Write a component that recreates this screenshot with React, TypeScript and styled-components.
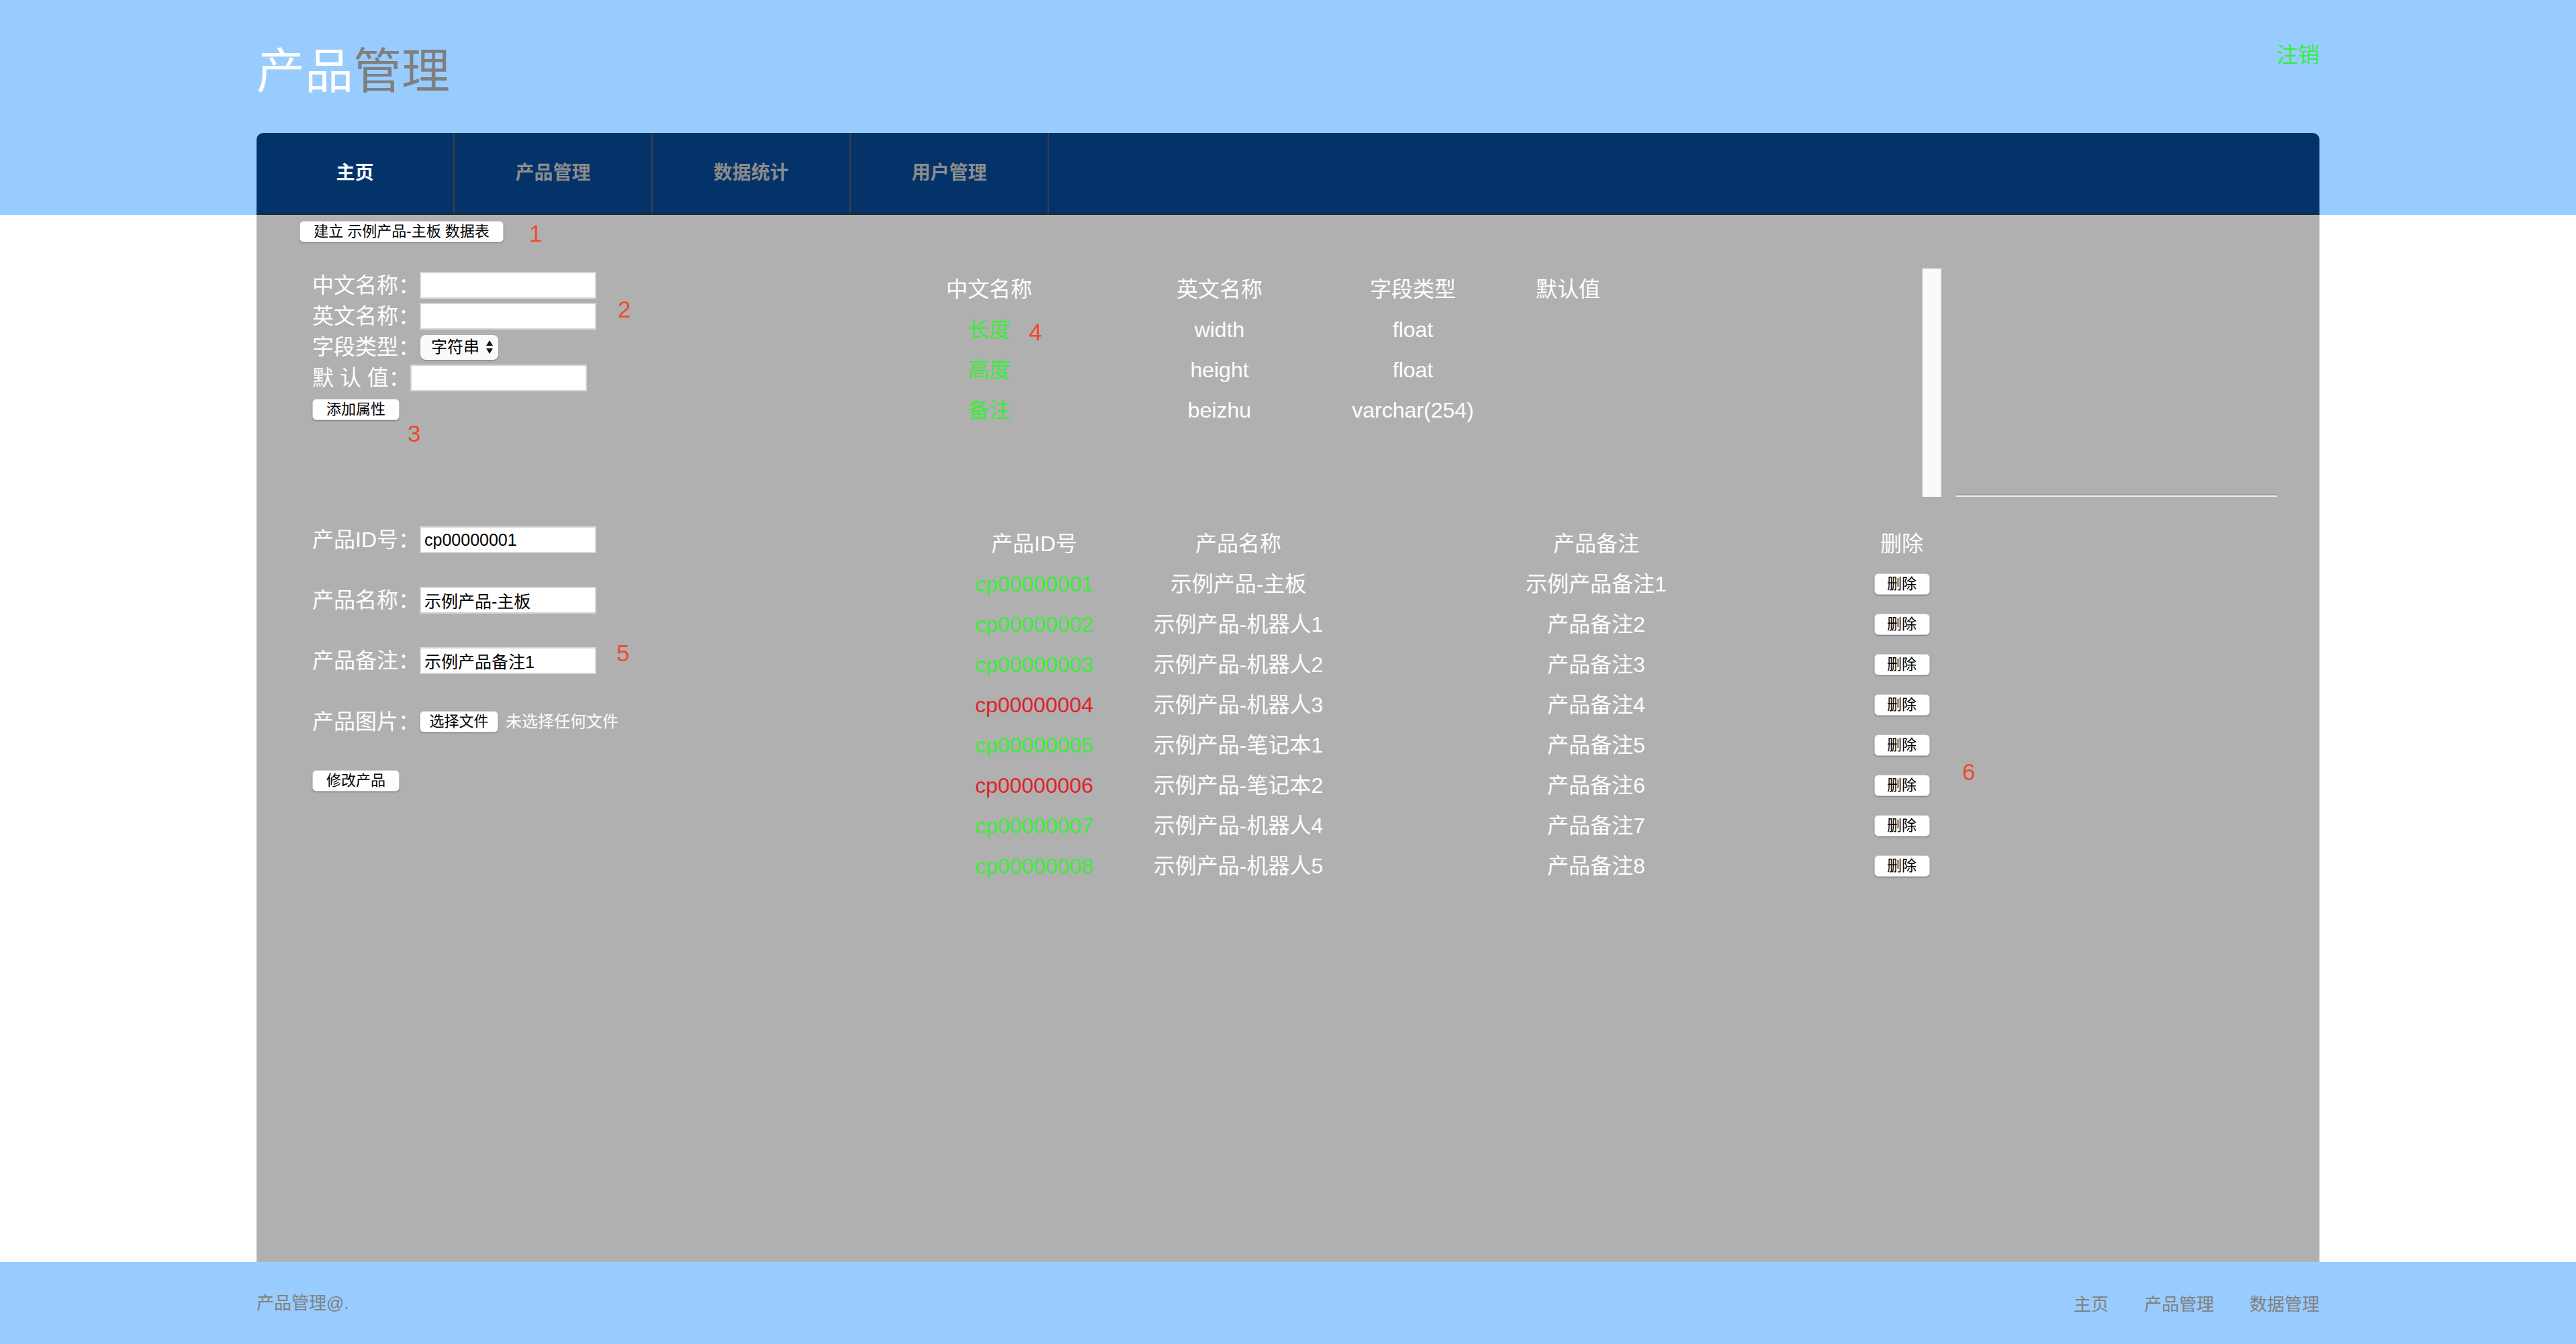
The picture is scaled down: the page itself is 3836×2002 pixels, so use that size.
import React from "react";
import styled, { createGlobalStyle } from "styled-components";

const GlobalStyle = createGlobalStyle`
  html, body { margin: 0; padding: 0; background: #ffffff; }
  body { font-family: "Liberation Sans", "Noto Sans CJK SC", sans-serif; }
  * { box-sizing: border-box; }
`;

const Page = styled.div`
  min-height: 100vh;
  display: flex;
  flex-direction: column;
`;

const Header = styled.header`
  background: #99ccfe;
`;

const HeaderTop = styled.div`
  width: 3072px;
  margin: 0 auto;
  height: 198px;
  display: flex;
  justify-content: space-between;
  align-items: flex-start;
`;

const Title = styled.h1`
  margin: 70px 0 0;
  font-size: 72px;
  line-height: 72px;
  font-weight: normal;
  color: #7f7f7f;
`;

const TitleLight = styled.span`
  color: #ffffff;
`;

const Logout = styled.a`
  margin-top: 66px;
  font-size: 32px;
  line-height: 32px;
  color: #33ee44;
  text-decoration: none;
`;

const Nav = styled.nav`
  width: 3072px;
  margin: 0 auto;
  height: 122px;
  display: flex;
  background: #04336a;
  border-radius: 10px 10px 0 0;
  border-bottom: 2px solid #1c2331;
  overflow: hidden;
`;

const Tab = styled.a<{ $active?: boolean }>`
  width: 295px;
  display: flex;
  align-items: center;
  justify-content: center;
  border-right: 2px solid #3a3f48;
  font-size: 28px;
  line-height: 28px;
  font-weight: bold;
  color: ${(p) => (p.$active ? "#ffffff" : "#8c8c8c")};
  text-decoration: none;
`;

const Main = styled.main`
  width: 3072px;
  margin: 0 auto;
  flex: 1;
  background: #b0b0b0;
  padding-top: 9px;
`;

const TopBar = styled.div`
  height: 32px;
  display: flex;
  align-items: flex-start;
  padding-left: 64px;
`;

const Btn = styled.button<{ $w: number }>`
  width: ${(p) => p.$w}px;
  height: 32px;
  padding: 0;
  background: #ffffff;
  border: 1px solid #c9c9c9;
  border-radius: 6px;
  box-shadow: 0 1px 2px rgba(0, 0, 0, 0.3);
  font-family: "Liberation Sans", "Noto Sans CJK SC", sans-serif;
  font-size: 22px;
  line-height: 30px;
  color: #000000;
  white-space: pre;
`;

const Annot = styled.span<{ $ml?: number; $mt?: number }>`
  font-family: "Liberation Sans", sans-serif;
  font-size: 35px;
  line-height: 35px;
  color: #ee4b2b;
  margin-left: ${(p) => p.$ml ?? 0}px;
  margin-top: ${(p) => p.$mt ?? 0}px;
  align-self: flex-start;
`;

const CellBadge = styled.span`
  position: absolute;
  left: 209px;
  top: 16px;
  font-family: "Liberation Sans", sans-serif;
  font-size: 35px;
  line-height: 35px;
  color: #ee4b2b;
`;

const Section = styled.section<{ $mt: number }>`
  display: flex;
  align-items: flex-start;
  margin-top: ${(p) => p.$mt}px;
`;

const Form = styled.div<{ $w: number; $pt: number; $gap: number }>`
  width: ${(p) => p.$w}px;
  padding: ${(p) => p.$pt}px 0 0 83px;
  display: flex;
  flex-direction: column;
  align-items: flex-start;
  gap: ${(p) => p.$gap}px;
`;

const Field = styled.div<{ $mt?: number }>`
  display: flex;
  align-items: center;
  margin-top: ${(p) => p.$mt ?? 0}px;
`;

const Label = styled.label`
  font-size: 32px;
  line-height: 40px;
  color: #ffffff;
  white-space: pre;
`;

const TextInput = styled.input`
  width: 263px;
  height: 40px;
  border: 2px solid #d6d6d6;
  background: #ffffff;
  padding: 0 5px;
  font-family: "Liberation Sans", "Noto Sans CJK SC", sans-serif;
  font-size: 25px;
  color: #000000;
  outline: none;
`;

const SelectBox = styled.div`
  width: 116px;
  height: 37px;
  margin-left: 1px;
  display: flex;
  align-items: center;
  padding: 0 7px 0 16px;
  background: #fafafa;
  border-radius: 8px;
  box-shadow: 0 1px 2px rgba(0, 0, 0, 0.3);
`;

const Select = styled.select`
  appearance: none;
  -webkit-appearance: none;
  flex: 1;
  min-width: 0;
  border: none;
  background: transparent;
  padding: 0;
  font-family: "Liberation Sans", "Noto Sans CJK SC", sans-serif;
  font-size: 24px;
  line-height: 30px;
  color: #000000;
  outline: none;
`;

const FileText = styled.span`
  margin-left: 11px;
  font-size: 24px;
  line-height: 32px;
  color: #ffffff;
`;

const Grid = styled.div<{ $cols: string; $mt?: number }>`
  display: grid;
  grid-template-columns: ${(p) => p.$cols};
  grid-auto-rows: 60px;
  margin-top: ${(p) => p.$mt ?? 0}px;
`;

const Cell = styled.div<{ $color?: string }>`
  position: relative;
  display: flex;
  align-items: center;
  justify-content: center;
  font-size: 32px;
  line-height: 40px;
  color: ${(p) => p.$color ?? "#ffffff"};
  white-space: nowrap;
`;

const ChartArea = styled.div`
  margin-left: 391px;
  height: 340px;
  display: flex;
  align-items: flex-end;
`;

const AxisBar = styled.div`
  width: 29px;
  height: 340px;
  background: #fafafa;
  border-left: 2px solid #d9d9d9;
  border-right: 1px solid #e6e6e6;
`;

const AxisLine = styled.div`
  margin-left: 21px;
  width: 479px;
  height: 4px;
  border-top: 2px solid #9d9d9d;
  border-left: 1px solid #dddddd;
  background: #efefef;
`;

const Footer = styled.footer`
  background: #99ccfe;
  height: 122px;
`;

const FooterInner = styled.div`
  width: 3072px;
  height: 100%;
  margin: 0 auto;
  display: flex;
  justify-content: space-between;
  align-items: center;
`;

const FooterText = styled.span`
  font-size: 26px;
  line-height: 30px;
  color: #808080;
`;

const FooterLinks = styled.div`
  display: flex;
  gap: 53px;
  padding-top: 4px;
`;

const FooterLink = styled.a`
  font-size: 26px;
  line-height: 30px;
  color: #808080;
  text-decoration: none;
`;

const GREEN = "#38ee38";
const RED = "#e2202a";

const attrs = [
  { cn: "长度", en: "width", type: "float" },
  { cn: "高度", en: "height", type: "float" },
  { cn: "备注", en: "beizhu", type: "varchar(254)" },
];

const products = [
  { id: "cp00000001", name: "示例产品-主板", note: "示例产品备注1", red: false },
  { id: "cp00000002", name: "示例产品-机器人1", note: "产品备注2", red: false },
  { id: "cp00000003", name: "示例产品-机器人2", note: "产品备注3", red: false },
  { id: "cp00000004", name: "示例产品-机器人3", note: "产品备注4", red: true },
  { id: "cp00000005", name: "示例产品-笔记本1", note: "产品备注5", red: false },
  { id: "cp00000006", name: "示例产品-笔记本2", note: "产品备注6", red: true },
  { id: "cp00000007", name: "示例产品-机器人4", note: "产品备注7", red: false },
  { id: "cp00000008", name: "示例产品-机器人5", note: "产品备注8", red: false },
];

const SelectArrows = () => (
  <svg width="12" height="22" viewBox="0 0 12 22">
    <path d="M6 1 L11 9 L1 9 Z" fill="#111" />
    <path d="M6 21 L11 13 L1 13 Z" fill="#111" />
  </svg>
);

export default function App() {
  return (
    <Page>
      <GlobalStyle />
      <Header>
        <HeaderTop>
          <Title>
            <TitleLight>产品</TitleLight>管理
          </Title>
          <Logout href="#">注销</Logout>
        </HeaderTop>
        <Nav>
          <Tab $active href="#">主页</Tab>
          <Tab href="#">产品管理</Tab>
          <Tab href="#">数据统计</Tab>
          <Tab href="#">用户管理</Tab>
        </Nav>
      </Header>

      <Main>
        <TopBar>
          <Btn $w={304}>建立 示例产品-主板 数据表</Btn>
          <Annot $ml={38} $mt={1}>1</Annot>
        </TopBar>

        <Section $mt={39}>
          <Form $w={941} $pt={5} $gap={6}>
            <Field>
              <Label>中文名称：</Label>
              <TextInput />
            </Field>
            <Field>
              <Label>英文名称：</Label>
              <TextInput />
              <Annot $ml={32} $mt={-8}>2</Annot>
            </Field>
            <Field>
              <Label>字段类型：</Label>
              <SelectBox>
                <Select defaultValue="string">
                  <option value="string">字符串</option>
                  <option value="float">浮点数</option>
                </Select>
                <SelectArrows />
              </SelectBox>
            </Field>
            <Field>
              <Label>默 认 值：</Label>
              <TextInput />
            </Field>
            <Field $mt={5}>
              <Btn $w={130}>添加属性</Btn>
            </Field>
            <Annot $ml={142} $mt={-4}>3</Annot>
          </Form>

          <Grid $cols="300px 386px 190px 272px" $mt={1}>
            <Cell>中文名称</Cell>
            <Cell>英文名称</Cell>
            <Cell>字段类型</Cell>
            <Cell>默认值</Cell>
            {attrs.map((a, i) => (
              <React.Fragment key={a.en}>
                <Cell $color={GREEN}>
                  {a.cn}
                  {i === 0 && <CellBadge>4</CellBadge>}
                </Cell>
                <Cell>{a.en}</Cell>
                <Cell>{a.type}</Cell>
                <Cell />
              </React.Fragment>
            ))}
          </Grid>

          <ChartArea>
            <AxisBar />
            <AxisLine />
          </ChartArea>
        </Section>

        <Section $mt={40}>
          <Form $w={1018} $pt={4} $gap={0}>
            <Field>
              <Label>产品ID号：</Label>
              <TextInput defaultValue="cp00000001" />
            </Field>
            <Field $mt={50}>
              <Label>产品名称：</Label>
              <TextInput defaultValue="示例产品-主板" />
            </Field>
            <Field $mt={50}>
              <Label>产品备注：</Label>
              <TextInput defaultValue="示例产品备注1" />
              <Annot $ml={30} $mt={-9}>5</Annot>
            </Field>
            <Field $mt={51}>
              <Label>产品图片：</Label>
              <Btn $w={117}>选择文件</Btn>
              <FileText>未选择任何文件</FileText>
            </Field>
            <Field $mt={52}>
              <Btn $w={130}>修改产品</Btn>
            </Field>
          </Form>

          <Grid $cols="280px 328px 738px 172px">
            <Cell>产品ID号</Cell>
            <Cell>产品名称</Cell>
            <Cell>产品备注</Cell>
            <Cell>删除</Cell>
            {products.map((p) => (
              <React.Fragment key={p.id}>
                <Cell $color={p.red ? RED : GREEN}>{p.id}</Cell>
                <Cell>{p.name}</Cell>
                <Cell>{p.note}</Cell>
                <Cell>
                  <Btn $w={83}>删除</Btn>
                </Cell>
              </React.Fragment>
            ))}
          </Grid>

          <Annot $ml={4} $mt={352}>6</Annot>
        </Section>
      </Main>

      <Footer>
        <FooterInner>
          <FooterText>产品管理@.</FooterText>
          <FooterLinks>
            <FooterLink href="#">主页</FooterLink>
            <FooterLink href="#">产品管理</FooterLink>
            <FooterLink href="#">数据管理</FooterLink>
          </FooterLinks>
        </FooterInner>
      </Footer>
    </Page>
  );
}
